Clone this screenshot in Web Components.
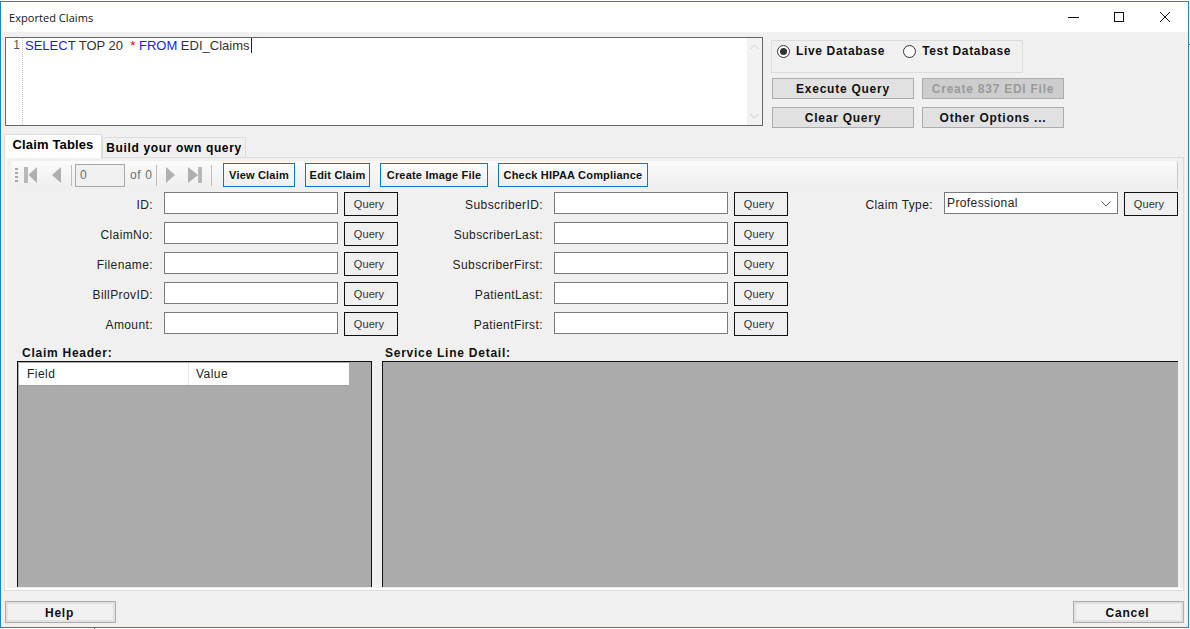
<!DOCTYPE html>
<html>
<head>
<meta charset="utf-8">
<title>Exported Claims</title>
<style>
html, body { margin: 0; background: #fff; }
body { font: 12px "Liberation Sans", Arial, sans-serif; color: #000; width: 1190px; height: 629px; overflow: hidden; }
</style>
</head>
<body>
<app-window caption="Exported Claims">
  <div slot="top" style="display:flex;gap:8px;align-items:flex-start">
    <sql-editor></sql-editor>
    <query-panel></query-panel>
  </div>
  <claim-tabs slot="main">
    <nav-toolbar></nav-toolbar>
    <claim-form></claim-form>
    <result-grids></result-grids>
  </claim-tabs>
  <flat-button slot="footer" variant="footer">Help</flat-button>
  <flat-button slot="footer" variant="footer">Cancel</flat-button>
</app-window>

<script>
class AppWindow extends HTMLElement {
  constructor() {
    super();
    this.attachShadow({ mode: 'open' }).innerHTML = `
<style>
:host { display: flex; flex-direction: column; position: relative; box-sizing: border-box; width: 1189px; height: 627px; margin-top: 1px; border: 1px solid #1883d7; background: #f0f0f0; }
.bar { height: 30px; flex: none; background: #fff; display: flex; align-items: center; padding-left: 8px; font: 11px "Open Sans", sans-serif; letter-spacing: .05px; color: #111; }
.cap { flex: 1; }
.ctl { width: 45px; height: 30px; display: flex; align-items: center; justify-content: center; }
.top { flex: none; padding: 5px 0 0 4px; height: 102px; box-sizing: border-box; }
.main { flex: none; padding: 0 4px 0 3px; }
.foot { flex: 1; display: flex; justify-content: space-between; padding: 10px 4px 0 4px; }
.tick { position: absolute; background: #555; }
</style>
<div class="bar">
  <span class="cap"></span>
  <span class="ctl"><svg width="12" height="12"><path d="M0 6.5H11" stroke="#111"/></svg></span>
  <span class="ctl"><svg width="12" height="12"><rect x="1.5" y="1.5" width="9" height="9" fill="none" stroke="#111"/></svg></span>
  <span class="ctl" style="width:46px;padding-left:1px"><svg width="12" height="12"><path d="M1 1L11 11M11 1L1 11" stroke="#111" fill="none"/></svg></span>
</div>
<div class="top"><slot name="top"></slot></div>
<div class="main"><slot name="main"></slot></div>
<div class="foot"><slot name="footer"></slot></div>
<span class="tick" style="left:1188px;top:42px;width:1px;height:1px"></span>
<span class="tick" style="left:93px;top:626px;width:1px;height:1px"></span>`;
    this.shadowRoot.querySelector('.cap').textContent = this.getAttribute('caption');
  }
}

class SqlEditor extends HTMLElement {
  constructor() {
    super();
    this.attachShadow({ mode: 'open' }).innerHTML = `
<style>
:host { display: flex; box-sizing: border-box; width: 758px; height: 89px; border: 1px solid #666; background: #fff; font: 13px "Liberation Sans", sans-serif; }
.num { width: 17px; text-align: right; padding: 0 2px 0 0; box-sizing: border-box; border-right: 1px dotted #c4c4c4; color: #555; line-height: 15px; font-size: 12px; }
.code { flex: 1; padding-left: 2px; line-height: 15px; color: #333; white-space: pre; }
.kw { color: #1a1aff; }
.op { color: #f00; }
.caret { border-left: 1px solid #222; margin-left: 1px; }
.scroll { width: 15px; background: #f2f2f2; display: flex; flex-direction: column; justify-content: space-between; align-items: center; padding: 6px 0; }
</style>
<div class="num">1</div>
<div class="code"><span class="kw">SELECT</span> TOP 20  <span class="op">*</span> <span class="kw">FROM</span> EDI_Claims<span class="caret"></span></div>
<div class="scroll">
  <svg width="9" height="6"><path d="M.5 5L4.5 1L8.5 5" fill="none" stroke="#c8c8c8"/></svg>
  <svg width="9" height="6"><path d="M.5 1L4.5 5L8.5 1" fill="none" stroke="#c8c8c8"/></svg>
</div>`;
  }
}

class RadioOption extends HTMLElement {
  constructor() {
    super();
    const on = this.hasAttribute('checked');
    this.attachShadow({ mode: 'open' }).innerHTML = `
<style>
:host { display: inline-flex; align-items: center; gap: 6px; font: bold 12px "Liberation Sans", sans-serif; letter-spacing: .65px; color: #111; }
svg { flex: none; }
</style>
<svg width="13" height="13"><circle cx="6.5" cy="6.5" r="6" fill="#fff" stroke="#333"/>${on ? '<circle cx="6.5" cy="6.5" r="3.5" fill="#333"/>' : ''}</svg>
<span><slot></slot></span>`;
  }
}

class FlatButton extends HTMLElement {
  constructor() {
    super();
    this.attachShadow({ mode: 'open' }).innerHTML = `
<style>
:host { display: flex; align-items: center; justify-content: center; box-sizing: border-box; font: bold 12px "Liberation Sans", sans-serif; letter-spacing: .75px; color: #111; white-space: nowrap; }
:host([variant="action"]) { height: 21px; border: 1px solid #adadad; background: #e1e1e1; padding-top: 1px; }
:host([variant="action"][disabled]) { background: #cdcdcd; color: #9a9a9a; }
:host([variant="tool"]) { height: 24px; border: 1px solid #0078d7; background: linear-gradient(#fdfdfd, #eeeeee); font-size: 11px; letter-spacing: .2px; }
:host([variant="query"]) { flex: none; width: 54px; height: 24px; border: 1px solid #111; background: #f0f0f0; font: 11px "Liberation Sans", sans-serif; letter-spacing: .1px; padding-right: 4px; color: #333; }
:host([variant="footer"]) { width: 111px; height: 22px; border: 1px solid #adadad; box-shadow: inset 0 0 0 2px #e1e1e1; background: #f0f0f0; padding: 1px 2px 0 0; }
</style>
<slot></slot>`;
  }
}

class QueryPanel extends HTMLElement {
  constructor() {
    super();
    this.attachShadow({ mode: 'open' }).innerHTML = `
<style>
:host { display: flex; flex-direction: column; padding-top: 3px; }
.group { box-sizing: border-box; width: 252px; height: 33px; border: 1px solid #dcdcdc; display: flex; gap: 18px; padding: 3px 0 0 5px; align-items: flex-start; margin-bottom: 5px; }
.btns { display: grid; grid-template-columns: 142px 142px; gap: 8px; margin-left: 1px; }
</style>
<div class="group">
  <radio-option checked>Live Database</radio-option>
  <radio-option>Test Database</radio-option>
</div>
<div class="btns">
  <flat-button variant="action">Execute Query</flat-button>
  <flat-button variant="action" disabled>Create 837 EDI File</flat-button>
  <flat-button variant="action">Clear Query</flat-button>
  <flat-button variant="action">Other Options ...</flat-button>
</div>`;
  }
}

class ClaimTabs extends HTMLElement {
  constructor() {
    super();
    this.attachShadow({ mode: 'open' }).innerHTML = `
<style>
:host { display: block; font: bold 12px "Liberation Sans", sans-serif; letter-spacing: .65px; }
.tabs { display: flex; align-items: flex-end; height: 24px; margin-bottom: -1px; position: relative; }
.tab { box-sizing: border-box; display: flex; align-items: center; justify-content: center; border: 1px solid #dcdcdc; }
.on { width: 98px; height: 24px; background: #fff; border-bottom: 0; font-size: 13px; letter-spacing: .15px; padding-bottom: 4px; }
.off { width: 144px; height: 21px; border-bottom: 0; }
.page { box-sizing: border-box; height: 434px; border: 1px solid #dcdcdc; box-shadow: inset 2px 0 #fff, inset 0 -2px #fff; background: #f0f0f0; padding: 3px 4px 0 2px; }
</style>
<div class="tabs">
  <div class="tab on">Claim Tables</div>
  <div class="tab off">Build your own query</div>
</div>
<div class="page"><slot></slot></div>`;
  }
}

class NavToolbar extends HTMLElement {
  constructor() {
    super();
    this.attachShadow({ mode: 'open' }).innerHTML = `
<style>
:host { display: flex; align-items: center; box-sizing: border-box; height: 28px; margin-left: 4px; width: 1167px; background: linear-gradient(#fbfbfb, #eeeeee); border-right: 1px solid #c8c8c8; border-radius: 3px 3px 0 0; padding-left: 4px; }
.grip { width: 3px; height: 15px; margin-right: 6px; background: repeating-linear-gradient(#a8a8a8 0 2px, transparent 2px 4px); flex: none; }
svg { flex: none; display: block; }
.sep { width: 1px; height: 21px; background: #bdbdbd; flex: none; }
.pos { box-sizing: border-box; width: 50px; height: 23px; border: 1px solid #a8a8a8; background: #f0f0f0; color: #6d6d6d; font: 12px "Liberation Sans", sans-serif; padding: 3px 0 0 4px; flex: none; }
.of { font: 12px "Liberation Sans", sans-serif; color: #6d6d6d; width: 26px; margin-left: 5px; flex: none; white-space: nowrap; }
flat-button { flex: none; }
</style>
<span class="grip"></span>
<svg width="13" height="16" style="margin-right:15px"><rect x="0" y="0" width="4" height="16" fill="#b8b8b8"/><path d="M13 0V16L4.500 8Z" fill="#b0b0b0"/></svg>
<svg width="9" height="16" style="margin-right:10px"><path d="M9 0V16L0 8Z" fill="#b0b0b0"/></svg>
<span class="sep" style="margin-right:3px"></span>
<span class="pos">0</span>
<span class="of">of 0</span>
<span class="sep" style="margin-right:9px"></span>
<svg width="9" height="16" style="margin-right:13px"><path d="M0 0V16L9 8Z" fill="#b0b0b0"/></svg>
<svg width="14" height="16" style="margin-right:9px"><path d="M0 0V16L10 8Z" fill="#b0b0b0"/><rect x="10" y="0" width="4" height="16" fill="#b8b8b8"/></svg>
<span class="sep" style="margin-right:11px"></span>
<flat-button variant="tool" style="width:72px;margin-right:10px">View Claim</flat-button>
<flat-button variant="tool" style="width:65px;margin-right:10px">Edit Claim</flat-button>
<flat-button variant="tool" style="width:108px;margin-right:10px">Create Image File</flat-button>
<flat-button variant="tool" style="width:150px">Check HIPAA Compliance</flat-button>`;
  }
}

class FieldRow extends HTMLElement {
  constructor() {
    super();
    this.attachShadow({ mode: 'open' }).innerHTML = `
<style>
:host { display: flex; align-items: flex-start; height: 24px; font: 12px "Liberation Sans", sans-serif; letter-spacing: .4px; color: #222; }
label { flex: 1; text-align: right; padding: 6px 11px 0 0; white-space: nowrap; }
.box { box-sizing: border-box; width: 174px; height: 22px; margin-right: 6px; border: 1px solid #7a7a7a; background: #fff; flex: none; display: flex; align-items: center; justify-content: space-between; padding: 0 6px 1px 2px; }
svg { margin-top: 2px; }
</style>
<label></label>
<div class="box"><slot></slot></div>
<flat-button variant="query">Query</flat-button>`;
    this.shadowRoot.querySelector('label').textContent = this.getAttribute('label');
    if (this.hasAttribute('combo')) {
      this.shadowRoot.querySelector('.box').insertAdjacentHTML('beforeend',
        '<svg width="10" height="6"><path d="M.5 .5L5 5L9.500 .5" fill="none" stroke="#555"/></svg>');
    }
  }
}

class ClaimForm extends HTMLElement {
  constructor() {
    super();
    const rows = [
      ['ID:', 'SubscriberID:'],
      ['ClaimNo:', 'SubscriberLast:'],
      ['Filename:', 'SubscriberFirst:'],
      ['BillProvID:', 'PatientLast:'],
      ['Amount:', 'PatientFirst:'],
    ];
    const cells = rows.map(([a, b], i) => `
      <field-row label="${a}"></field-row>
      <field-row label="${b}"></field-row>
      ${i === 0 ? '<field-row label="Claim Type:" combo>Professional</field-row>' : '<span></span>'}`).join('');
    this.attachShadow({ mode: 'open' }).innerHTML = `
<style>
:host { display: grid; grid-template-columns: 391px 390px 390px; row-gap: 6px; margin-top: 3px; }
</style>${cells}`;
  }
}

class ResultGrids extends HTMLElement {
  constructor() {
    super();
    this.attachShadow({ mode: 'open' }).innerHTML = `
<style>
:host { display: flex; gap: 10px; margin: 8px 0 0 10px; font: bold 12px "Liberation Sans", sans-serif; letter-spacing: .75px; color: #111; }
.col { display: flex; flex-direction: column; }
.cap { height: 17px; line-height: 17px; padding: 1px 0 0 5px; box-sizing: border-box; }
.cap.r { padding-left: 3px; }
.grid { box-sizing: border-box; height: 226px; background: #ababab; border-top: 1px solid #111; border-left: 1px solid #111; }
.l { width: 355px; border-right: 1px solid #111; padding: 1px 0 0 1px; }
.r { width: 796px; }
.head { display: flex; width: 330px; height: 23px; background: #fff; border-bottom: 1px solid #a0a0a0; box-sizing: border-box; font: 12px "Liberation Sans", sans-serif; letter-spacing: .45px; color: #222; line-height: 23px; }
.head span { padding-left: 7px; box-sizing: border-box; }
.head span:first-child { width: 170px; padding-left: 8px; border-right: 1px solid #e4e4e4; }
</style>
<div class="col">
  <div class="cap">Claim Header:</div>
  <div class="grid l"><div class="head"><span>Field</span><span>Value</span></div></div>
</div>
<div class="col">
  <div class="cap r">Service Line Detail:</div>
  <div class="grid r"></div>
</div>`;
  }
}

customElements.define('flat-button', FlatButton);
customElements.define('radio-option', RadioOption);
customElements.define('sql-editor', SqlEditor);
customElements.define('query-panel', QueryPanel);
customElements.define('nav-toolbar', NavToolbar);
customElements.define('field-row', FieldRow);
customElements.define('claim-form', ClaimForm);
customElements.define('result-grids', ResultGrids);
customElements.define('claim-tabs', ClaimTabs);
customElements.define('app-window', AppWindow);
</script>
</body>
</html>
